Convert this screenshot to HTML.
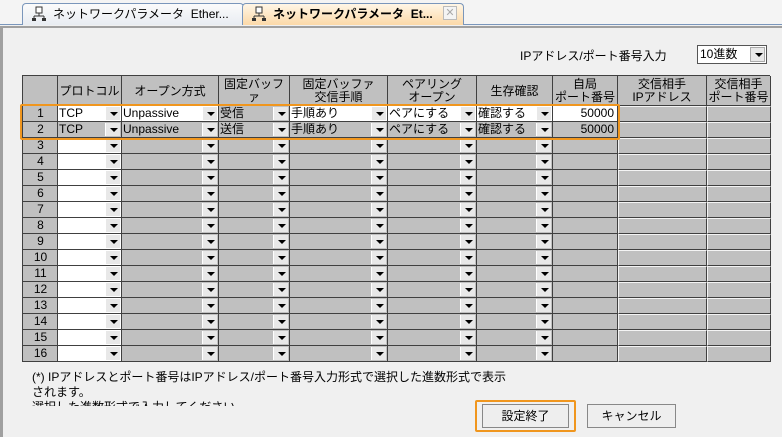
<!DOCTYPE html>
<html><head><meta charset="utf-8"><style>
*{margin:0;padding:0;box-sizing:border-box}
body{width:782px;height:437px;background:#f0f0f0;font-family:"Liberation Sans","Noto Sans CJK JP",sans-serif;font-size:12px;position:relative;overflow:hidden;color:#000}
.tabbar{position:absolute;left:0;top:0;width:782px;height:25px;background:#f4f4f4;border-bottom:1px solid #7a96bb}
.tab{position:absolute;top:3px;height:22px;border:1px solid #7a96bb;border-bottom:none;border-radius:4px 4px 0 0;font-size:12px;line-height:20px;padding-left:30px;white-space:nowrap}
.frame{position:absolute;left:0;top:26px;width:782px;height:411px;border-left:3px solid #a0a0a0;border-top:2px solid #a0a0a0;background:#f0f0f0}
.abs{position:absolute}
.c{position:absolute;border-right:1px solid #404040;border-bottom:1px solid #404040;overflow:hidden;white-space:nowrap}
.dd{position:absolute;top:1px;right:1px;width:15px;height:13px;background:#e8e8e8;border-left:1px solid #fff}
.dd:after{content:"";position:absolute;left:4px;top:5px;border-left:4px solid transparent;border-right:4px solid transparent;border-top:4px solid #000}
.hd{position:absolute;background:#c0c0c0;border-right:1px solid #404040;border-bottom:1px solid #404040;text-align:center;font-size:12px;line-height:13px;padding-top:2px;overflow:hidden}
.btn{position:absolute;background:#eee;border:1px solid #888;text-align:center;font-size:12px}
</style></head><body>
<div class="tabbar">
<div class="tab" style="left:22px;width:222px;background:linear-gradient(#fbfbfb,#e8ecf2)">ネットワークパラメータ&nbsp; Ether...</div>
<div class="tab" style="left:242px;width:222px;background:linear-gradient(#fff6e6,#fcd9a8);font-weight:bold">ネットワークパラメータ&nbsp; Et...</div>
<svg class="abs" style="left:31px;top:6px" width="16" height="16" viewBox="0 0 16 16"><rect x="5" y="1" width="6" height="6" fill="#fff" stroke="#333"/><path d="M8 7v3M3 10h10M3 10v2M13 10v2" stroke="#333" fill="none"/><rect x="1" y="12" width="4" height="3" fill="#333"/><rect x="11" y="12" width="4" height="3" fill="#333"/></svg>
<svg class="abs" style="left:251px;top:6px" width="16" height="16" viewBox="0 0 16 16"><rect x="5" y="1" width="6" height="6" fill="#fff" stroke="#333"/><path d="M8 7v3M3 10h10M3 10v2M13 10v2" stroke="#333" fill="none"/><rect x="1" y="12" width="4" height="3" fill="#333"/><rect x="11" y="12" width="4" height="3" fill="#333"/></svg>
<div class="abs" style="left:443px;top:6px;width:14px;height:14px;border:1px solid #bbb;background:#f4f4f4;color:#aaa;font-size:11px;line-height:12px;text-align:center">✕</div>
</div>
<div class="frame"></div>
<div class="abs" style="left:520px;top:47px;font-size:12px">IPアドレス/ポート番号入力</div>
<div class="abs" style="left:697px;top:45px;width:70px;height:19px;background:#fff;border:1px solid #555;font-size:12px;line-height:17px;padding-left:2px">10進数<div class="dd" style="top:1px;height:15px;background:#e8e8e8;border:1px solid #aaa"></div></div>
<div class="abs" style="left:22px;top:75px;width:748px;height:287px;border-left:1px solid #404040;border-top:1px solid #404040;background:#c0c0c0"></div>
<div id="g"></div>
<div class="abs" style="left:20px;top:104px;width:600px;height:36px;border:2px solid #f0961e;border-radius:2px"></div>
<div class="abs" style="left:32px;top:370px;font-size:12px;line-height:15px">(*) IPアドレスとポート番号はIPアドレス/ポート番号入力形式で選択した進数形式で表示<br>されます。<br><span style="display:inline-block;height:6px;overflow:hidden;vertical-align:top">選択した進数形式で入力してください。</span></div>
<div class="abs" style="left:475px;top:400px;width:101px;height:32px;border:2px solid #f0961e;border-radius:2px"></div>
<div class="btn" style="left:482px;top:404px;width:87px;height:24px;line-height:22px">設定終了</div>
<div class="btn" style="left:587px;top:404px;width:89px;height:24px;line-height:22px">キャンセル</div>
<script>
var cols=[22,57,121,218,289,387,476,552,617,706,770];
var hdr=["","プロトコル","オープン方式","固定バッファ<br>ア","固定バッファ<br>交信手順","ペアリング<br>オープン","生存確認","自局<br>ポート番号","交信相手<br>IPアドレス","交信相手<br>ポート番号"];
var h="";
for(var i=0;i<10;i++){var w=cols[i+1]-cols[i];var pt=hdr[i].indexOf("<br>")<0?"padding-top:9px;":"";
h+='<div class="hd" style="left:'+(cols[i]+1)+'px;top:76px;width:'+w+'px;height:30px;'+pt+'">'+hdr[i]+'</div>';}
var r1=["TCP","Unpassive","受信","手順あり","ペアにする","確認する","50000"];
var r2=["TCP","Unpassive","送信","手順あり","ペアにする","確認する","50000"];
for(var r=0;r<16;r++){var y=106+r*16;
for(var i=0;i<10;i++){var x=cols[i]+1,w=cols[i+1]-cols[i];var bg="#c0c0c0",t="",st="";
if(i==0){t=r+1;st="text-align:center;";}
else if(i<=6){t=r==0?r1[i-1]:(r==1?r2[i-1]:"");
 if((i==1&&r!=1)||(r==0&&i!=3))bg="#fff";
}
else if(i==7){t=r==0?"50000":(r==1?"50000":"");st="text-align:right;padding-right:3px;";if(r==0)bg="#fff";}
if(i>=8){h+='<div class="c" style="left:'+x+'px;top:'+y+'px;width:'+w+'px;height:16px;background:#c0c0c0;border-top:1px solid #f4f4f4;border-left:1px solid #f4f4f4"></div>';continue;}
h+='<div class="c" style="left:'+x+'px;top:'+y+'px;width:'+w+'px;height:16px;background:'+bg+';line-height:15px;padding-left:1px;'+st+'">'+t+(i>=1&&i<=6?'<div class="dd"></div>':'')+'</div>';}}
document.getElementById("g").innerHTML=h;
</script>
</body></html>
